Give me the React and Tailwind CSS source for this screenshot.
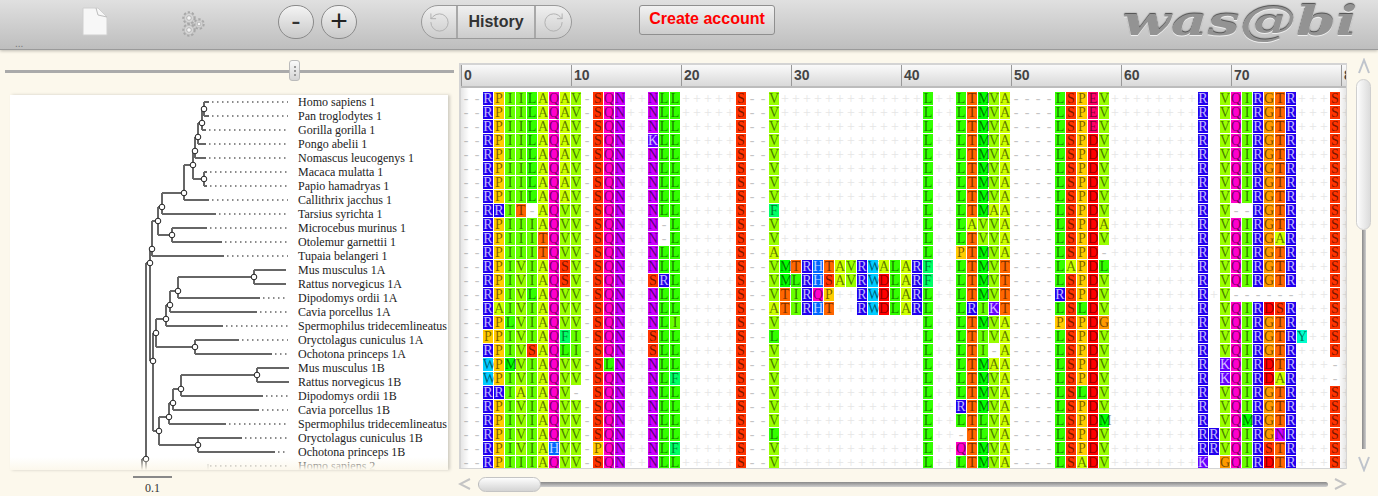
import { RotateCcw, RotateCw } from "lucide-react";

const COLORS = {
  A: "bg-[#ccff00] text-black/55",
  R: "bg-[#2200ee] text-white/75",
  N: "bg-[#cc00ff] text-black/55",
  D: "bg-[#ff0000] text-black/45",
  Q: "bg-[#ff00cc] text-black/55",
  E: "bg-[#ff0066] text-black/55",
  G: "bg-[#ff9900] text-black/55",
  H: "bg-[#0066ff] text-white/75",
  I: "bg-[#66ff00] text-black/55",
  L: "bg-[#33ff00] text-black/55",
  K: "bg-[#6600ff] text-white/75",
  M: "bg-[#00ff00] text-black/55",
  F: "bg-[#00ff66] text-black/55",
  P: "bg-[#ffcc00] text-black/55",
  S: "bg-[#ff3300] text-black/55",
  T: "bg-[#ff6600] text-black/55",
  W: "bg-[#00ccff] text-black/55",
  Y: "bg-[#00ffcc] text-black/55",
  V: "bg-[#99ff00] text-black/55",
};

const BASE =
  "--RPIILAQAV-SQN++NLL+++++S--V+++++++++++++L++LTMVA----LSPDV++++++++R VQIRGTR+++S+";

// changes from BASE per row, keyed by start column
const ROW_EDITS = [
  { 57: "E" },
  { 57: "E" },
  { 57: "E" },
  { 17: "K" },
  {},
  {},
  {},
  {},
  { 3: "R", 5: "T-", 9: "V", 28: "F", 48: "A", 70: "--" },
  { 6: "I", 9: "V", 18: "-", 46: "AV", 58: "A" },
  { 6: "I", 7: "T", 9: "V", 18: "-", 47: "V", 74: "A" },
  { 6: "I", 7: "T", 9: "V", 28: "A", 45: "P", 58: "-" },
  { 5: "VI", 9: "S", 28: "VMTRHTAVRWALARF", 49: "T", 55: "A", 58: "L" },
  { 5: "VI", 9: "S", 17: "SR", 28: "VMLRHSAVRWDLARF", 49: "T" },
  { 5: "V", 9: "V", 28: "VTIRQP++RWDLARL", 49: "T", 54: "R", 68: "+", 70: "------" },
  { 3: "A", 5: "VI", 9: "V", 28: "ATIRHT++RWDLARL", 46: "RIKT", 56: "L", 73: "DS" },
  { 4: "LVI", 9: "V", 19: "I", 54: "P", 58: "G" },
  { 2: "P", 5: "VI", 9: "FI", 17: "S", 28: "L", 47: "I", 76: "Y" },
  { 5: "VS", 9: "LI", 17: "S", 47: "I-" },
  { 2: "W", 4: "MVI", 9: "V", 13: "L", 48: "A", 69: "K", 73: "D", 79: "-" },
  { 2: "W", 5: "VI", 9: "V", 19: "F", 69: "K", 73: "DA", 79: "-" },
  { 3: "R", 5: "AI", 9: "V-", 11: " ", 56: "L" },
  { 5: "VI", 9: "V", 45: "R" },
  { 5: "VI", 9: "V", 47: "L", 58: "M", 71: "M" },
  { 5: "VI", 9: "V", 28: "L", 45: "-", 47: "L", 68: "R", 74: "N" },
  { 5: "VI", 8: "H", 9: "V", 12: "P", 19: "F", 45: "Q", 68: "R", 73: "S" },
  { 5: "II", 9: "V", 56: "A", 67: "K", 69: "G", 73: "D" },
];

const ROWS = ROW_EDITS.map((edits) => {
  const chars = BASE.split("");
  Object.entries(edits).forEach(([col, text]) => {
    text.split("").forEach((c, i) => {
      chars[Number(col) + i] = c;
    });
  });
  return chars;
});

const NAMES = [
  "Homo sapiens 1",
  "Pan troglodytes 1",
  "Gorilla gorilla 1",
  "Pongo abelii 1",
  "Nomascus leucogenys 1",
  "Macaca mulatta 1",
  "Papio hamadryas 1",
  "Callithrix jacchus 1",
  "Tarsius syrichta 1",
  "Microcebus murinus 1",
  "Otolemur garnettii 1",
  "Tupaia belangeri 1",
  "Mus musculus 1A",
  "Rattus norvegicus 1A",
  "Dipodomys ordii 1A",
  "Cavia porcellus 1A",
  "Spermophilus tridecemlineatus",
  "Oryctolagus cuniculus 1A",
  "Ochotona princeps 1A",
  "Mus musculus 1B",
  "Rattus norvegicus 1B",
  "Dipodomys ordii 1B",
  "Cavia porcellus 1B",
  "Spermophilus tridecemlineatus",
  "Oryctolagus cuniculus 1B",
  "Ochotona princeps 1B",
  "Homo sapiens 2",
];

// [x, y, parentX, top, bottom]
const NODES = [
  [204, 109, 202, 102, 116],
  [202, 123, 198, 109, 130],
  [198, 137, 195, 123, 144],
  [195, 151, 193, 137, 158],
  [193, 165, 184, 151, 179],
  [204, 179, 193, 172, 186],
  [184, 193, 162, 165, 200],
  [162, 207, 158, 193, 214],
  [158, 221, 152, 207, 235],
  [172, 235, 158, 228, 242],
  [152, 249, 150, 221, 256],
  [150, 263, 146, 249, 361],
  [254, 277, 178, 270, 284],
  [178, 291, 170, 277, 298],
  [170, 305, 166, 291, 312],
  [166, 319, 156, 305, 326],
  [156, 333, 153, 319, 347],
  [195, 347, 156, 340, 354],
  [153, 361, 150, 333, 431],
  [257, 375, 181, 368, 382],
  [181, 389, 173, 375, 396],
  [173, 403, 169, 389, 410],
  [169, 417, 159, 403, 424],
  [159, 431, 153, 417, 445],
  [198, 445, 159, 438, 452],
  [146, 459, 142, 263, 472],
];

// [parentX, endX] for each leaf row
const LEAVES = [
  [204, 209], [204, 209], [202, 206], [198, 206], [195, 206], [204, 207], [204, 207],
  [184, 209], [162, 216], [172, 207], [172, 222], [152, 224], [254, 286], [254, 286],
  [178, 260], [170, 257], [166, 223], [195, 239], [195, 272], [257, 289], [257, 289],
  [181, 263], [173, 259], [169, 226], [198, 242], [198, 275],
];

const Tree = () => (
  <svg width="280" height="375" viewBox="10 95 280 375" className="shrink-0">
    <g stroke="#666" strokeWidth="2" fill="none">
      <path d="M142 459V472" />
      {NODES.map(([x, y, px, top, bottom], i) => (
        <g key={i}>
          <path d={`M${x} ${top}V${bottom}`} />
          <path d={`M${px} ${y}H${x}`} />
        </g>
      ))}
      {LEAVES.map(([px, end], i) => (
        <path key={i} d={`M${px} ${102 + i * 14}H${end}`} />
      ))}
    </g>
    <g stroke="#666" strokeWidth="1.5" strokeDasharray="1.5 3.5" fill="none">
      {LEAVES.map(([, end], i) =>
        end < 284 ? <path key={i} d={`M${end + 3} ${102 + i * 14}H288`} /> : null
      )}
      <path d="M210 466H288" />
    </g>
    <path d="M208 464V472" stroke="#999" fill="none" />
    {NODES.map(([x, y], i) => (
      <circle key={i} cx={x} cy={y} r="2.8" fill="#fff" stroke="#222" strokeWidth="1" />
    ))}
  </svg>
);

const Gear = ({ x, y, r }) => (
  <g>
    <circle cx={x} cy={y} r={r} fill="none" stroke="#a8a8a8" strokeWidth="2.4" strokeDasharray="2.2 1.8" />
    <circle cx={x} cy={y} r={r - 0.8} fill="#d6d6d6" stroke="#b4b4b4" strokeWidth="0.6" />
    <circle cx={x} cy={y} r={r * 0.42} fill="#f4f4f4" stroke="#a8a8a8" strokeWidth="0.8" />
  </g>
);

const Cell = ({ c }) => {
  if (c === " ") return <div className="w-[11px] h-[14px] shrink-0" />;
  if (c === "+" || c === "-")
    return (
      <div
        className={`w-[11px] h-[14px] shrink-0 pr-[1px] text-center text-[14px] leading-[13px] ${
          c === "+" ? "text-[#e6e6e6]" : "text-[#c4c4c4]"
        }`}
      >
        {c}
      </div>
    );
  return (
    <div className="w-[11px] h-[14px] shrink-0">
      <div className={`w-[10px] h-[13px] text-center text-[14px] leading-[13px] ${COLORS[c]}`}>{c}</div>
    </div>
  );
};

const TICKS = [0, 10, 20, 30, 40, 50, 60, 70, 80];

export default function App() {
  return (
    <div className="relative w-[1378px] h-[496px] overflow-hidden bg-[#fcf8ec] font-['Liberation_Sans',sans-serif]">
      {/* toolbar */}
      <header className="relative flex items-start h-[50px] bg-gradient-to-b from-[#e0e0e0] to-[#bebebe] border-b border-[#9a9a9a] shadow-[0_1px_3px_rgba(0,0,0,0.25)]">
        <svg width="26" height="30" viewBox="0 0 26 30" className="ml-[82px] mt-[7px] shrink-0">
          <path d="M1 1H16L25 10V28H1Z" fill="#f7f7f7" stroke="#cfcfcf" strokeWidth="1" />
          <path d="M14 1L16 8L25 10" fill="none" stroke="#bdbdbd" strokeWidth="1" />
        </svg>
        <svg width="26" height="30" viewBox="0 0 26 30" className="ml-[73px] mt-[9px] shrink-0">
          <Gear x={8} y={9} r={5.5} />
          <Gear x={18} y={15} r={4.5} />
          <Gear x={8} y={21} r={5.5} />
        </svg>
        <button className="ml-[71px] mt-[5px] w-[36px] h-[34px] shrink-0 rounded-full border border-[#8a8a8a] bg-gradient-to-b from-[#f4f4f4] to-[#c9c9c9] text-[#333] text-[28px] leading-[28px] pb-[3px]">
          -
        </button>
        <button className="ml-[7px] mt-[5px] w-[36px] h-[34px] shrink-0 rounded-full border border-[#8a8a8a] bg-gradient-to-b from-[#f4f4f4] to-[#c9c9c9] text-[#222] text-[30px] leading-[30px] pb-[3px]">
          +
        </button>
        <div className="ml-[64px] mt-[5px] flex h-[34px] w-[151px] shrink-0 rounded-full border border-[#9a9a9a] overflow-hidden bg-gradient-to-b from-[#f0f0f0] to-[#cccccc]">
          <div className="flex w-[36px] items-center justify-center border-r-2 border-[#a8a8a8]">
            <RotateCcw size={23} strokeWidth={1} color="#b0b0b0" />
          </div>
          <div className="flex flex-1 items-center justify-center border-r-2 border-[#a8a8a8] text-[16px] font-bold text-[#333]">
            History
          </div>
          <div className="flex w-[35px] items-center justify-center">
            <RotateCw size={23} strokeWidth={1} color="#b0b0b0" />
          </div>
        </div>
        <button className="ml-[67px] mt-[5px] w-[136px] h-[30px] shrink-0 rounded-[3px] border border-[#8f8f8f] bg-gradient-to-b from-[#f2f2f2] to-[#cdcdcd] text-[16px] font-bold text-[#ff0000] pb-[2px]">
          Create account
        </button>
        <div className="ml-auto mr-[21px] mt-[-3px] origin-right scale-x-[1.38] font-['DejaVu_Serif',serif] italic font-bold text-[41px] leading-[48px] text-[#939393] [text-shadow:0_1px_0_#eee,0_-1px_1px_#444]">
          was@bi
        </div>
        <div className="absolute left-[15px] bottom-[1px] text-[10px] leading-[8px] text-[#777]">...</div>
      </header>

      <div className="flex h-[446px]">
        {/* tree column */}
        <div className="w-[459px] shrink-0 font-['Liberation_Serif',serif]">
          <div className="relative h-[45px]">
            <div className="absolute left-[5px] top-[20px] w-[449px] h-[3px] bg-[#aaa]" />
            <div className="absolute left-[289px] top-[10px] w-[11px] h-[21px] rounded-[3px] border border-[#bbb] bg-gradient-to-b from-[#fafafa] to-[#d4d4d4] flex flex-col items-center justify-center gap-[2px]">
              <span className="w-[2px] h-[2px] bg-[#999]" />
              <span className="w-[2px] h-[2px] bg-[#999]" />
              <span className="w-[2px] h-[2px] bg-[#999]" />
            </div>
          </div>
          <div className="relative ml-[10px] w-[438px] h-[375px] overflow-hidden bg-white shadow-[2px_0_3px_rgba(0,0,0,0.18)] flex">
            <Tree />
            <div className="ml-[8px] whitespace-nowrap text-[12px] leading-[14px] text-[#222]">
              {NAMES.map((name, i) => (
                <div key={i} className="h-[14px]">
                  {name}
                </div>
              ))}
            </div>
            <div className="absolute left-0 right-0 bottom-0 h-[13px] bg-gradient-to-b from-transparent to-[#fcf8ec]" />
          </div>
          <div className="ml-[133px] mt-[6px] w-[39px] h-[2px] bg-[#888]" />
          <div className="ml-[133px] w-[39px] text-center text-[12px] leading-[20px] text-[#333]">0.1</div>
        </div>

        {/* alignment column */}
        <div className="w-[888px] shrink-0 font-['Liberation_Serif',serif]">
          <div className="relative mt-[13px] h-[406px] overflow-hidden border-2 border-[#d4d4d4] border-r-[1px] border-b-[1px] bg-white">
            <div className="flex h-[23px] border-b-2 border-[#bcbcbc] bg-gradient-to-b from-[#fafafa] to-[#d9d9d9] font-['Liberation_Sans',sans-serif] text-[14px] font-bold leading-[21px] text-[#444]">
              {TICKS.map((t) => (
                <div key={t} className="w-[110px] shrink-0 border-l border-[#999] pl-[2px]">
                  {t}
                </div>
              ))}
            </div>
            <div className="pt-[4px]">
              {ROWS.map((chars, r) => (
                <div key={r} className="flex h-[14px]">
                  {chars.map((c, i) => (
                    <Cell key={i} c={c} />
                  ))}
                </div>
              ))}
            </div>
            <div className="absolute left-0 top-[23px] bottom-0 w-[8px] bg-gradient-to-r from-black/10 to-transparent" />
            <div className="absolute right-0 top-[23px] bottom-0 w-[8px] bg-gradient-to-l from-black/10 to-transparent" />
          </div>
          <div className="relative flex h-[27px] items-center pt-[3px]">
            <svg width="14" height="14" viewBox="0 0 14 14" className="ml-[-1px] shrink-0">
              <path d="M12 2L2 7L12 12" fill="none" stroke="#c4c4c4" strokeWidth="2" />
            </svg>
            <div className="relative ml-[6px] w-[854px] h-[5px] rounded-full bg-gradient-to-b from-[#8a8a8a] to-[#d0d0d0]">
              <div className="absolute left-0 top-[-5px] w-[63px] h-[15px] rounded-full border border-[#c4c4c4] bg-gradient-to-b from-[#fdfdfd] to-[#d4d4d4]" />
            </div>
            <svg width="14" height="14" viewBox="0 0 14 14" className="ml-[5px] shrink-0">
              <path d="M2 2L12 7L2 12" fill="none" stroke="#c4c4c4" strokeWidth="2" />
            </svg>
          </div>
        </div>

        {/* vertical scrollbar */}
        <div className="flex w-[31px] shrink-0 flex-col items-center pl-[2px] pt-[8px]">
          <svg width="14" height="16" viewBox="0 0 14 16" className="shrink-0">
            <path d="M2 15L7 2L12 15" fill="none" stroke="#bfc4cc" strokeWidth="2" />
          </svg>
          <div className="mt-[5px] h-[151px] w-[15px] shrink-0 rounded-full border border-[#cfcfcf] bg-gradient-to-r from-[#fdfdfd] to-[#dcdcdc]" />
          <div className="h-[219px] w-[4px] shrink-0 bg-gradient-to-r from-[#8a8a8a] to-[#cfcfcf]" />
          <svg width="14" height="16" viewBox="0 0 14 16" className="mt-[7px] shrink-0">
            <path d="M2 1L7 14L12 1" fill="none" stroke="#bfc4cc" strokeWidth="2" />
          </svg>
        </div>
      </div>
    </div>
  );
}
